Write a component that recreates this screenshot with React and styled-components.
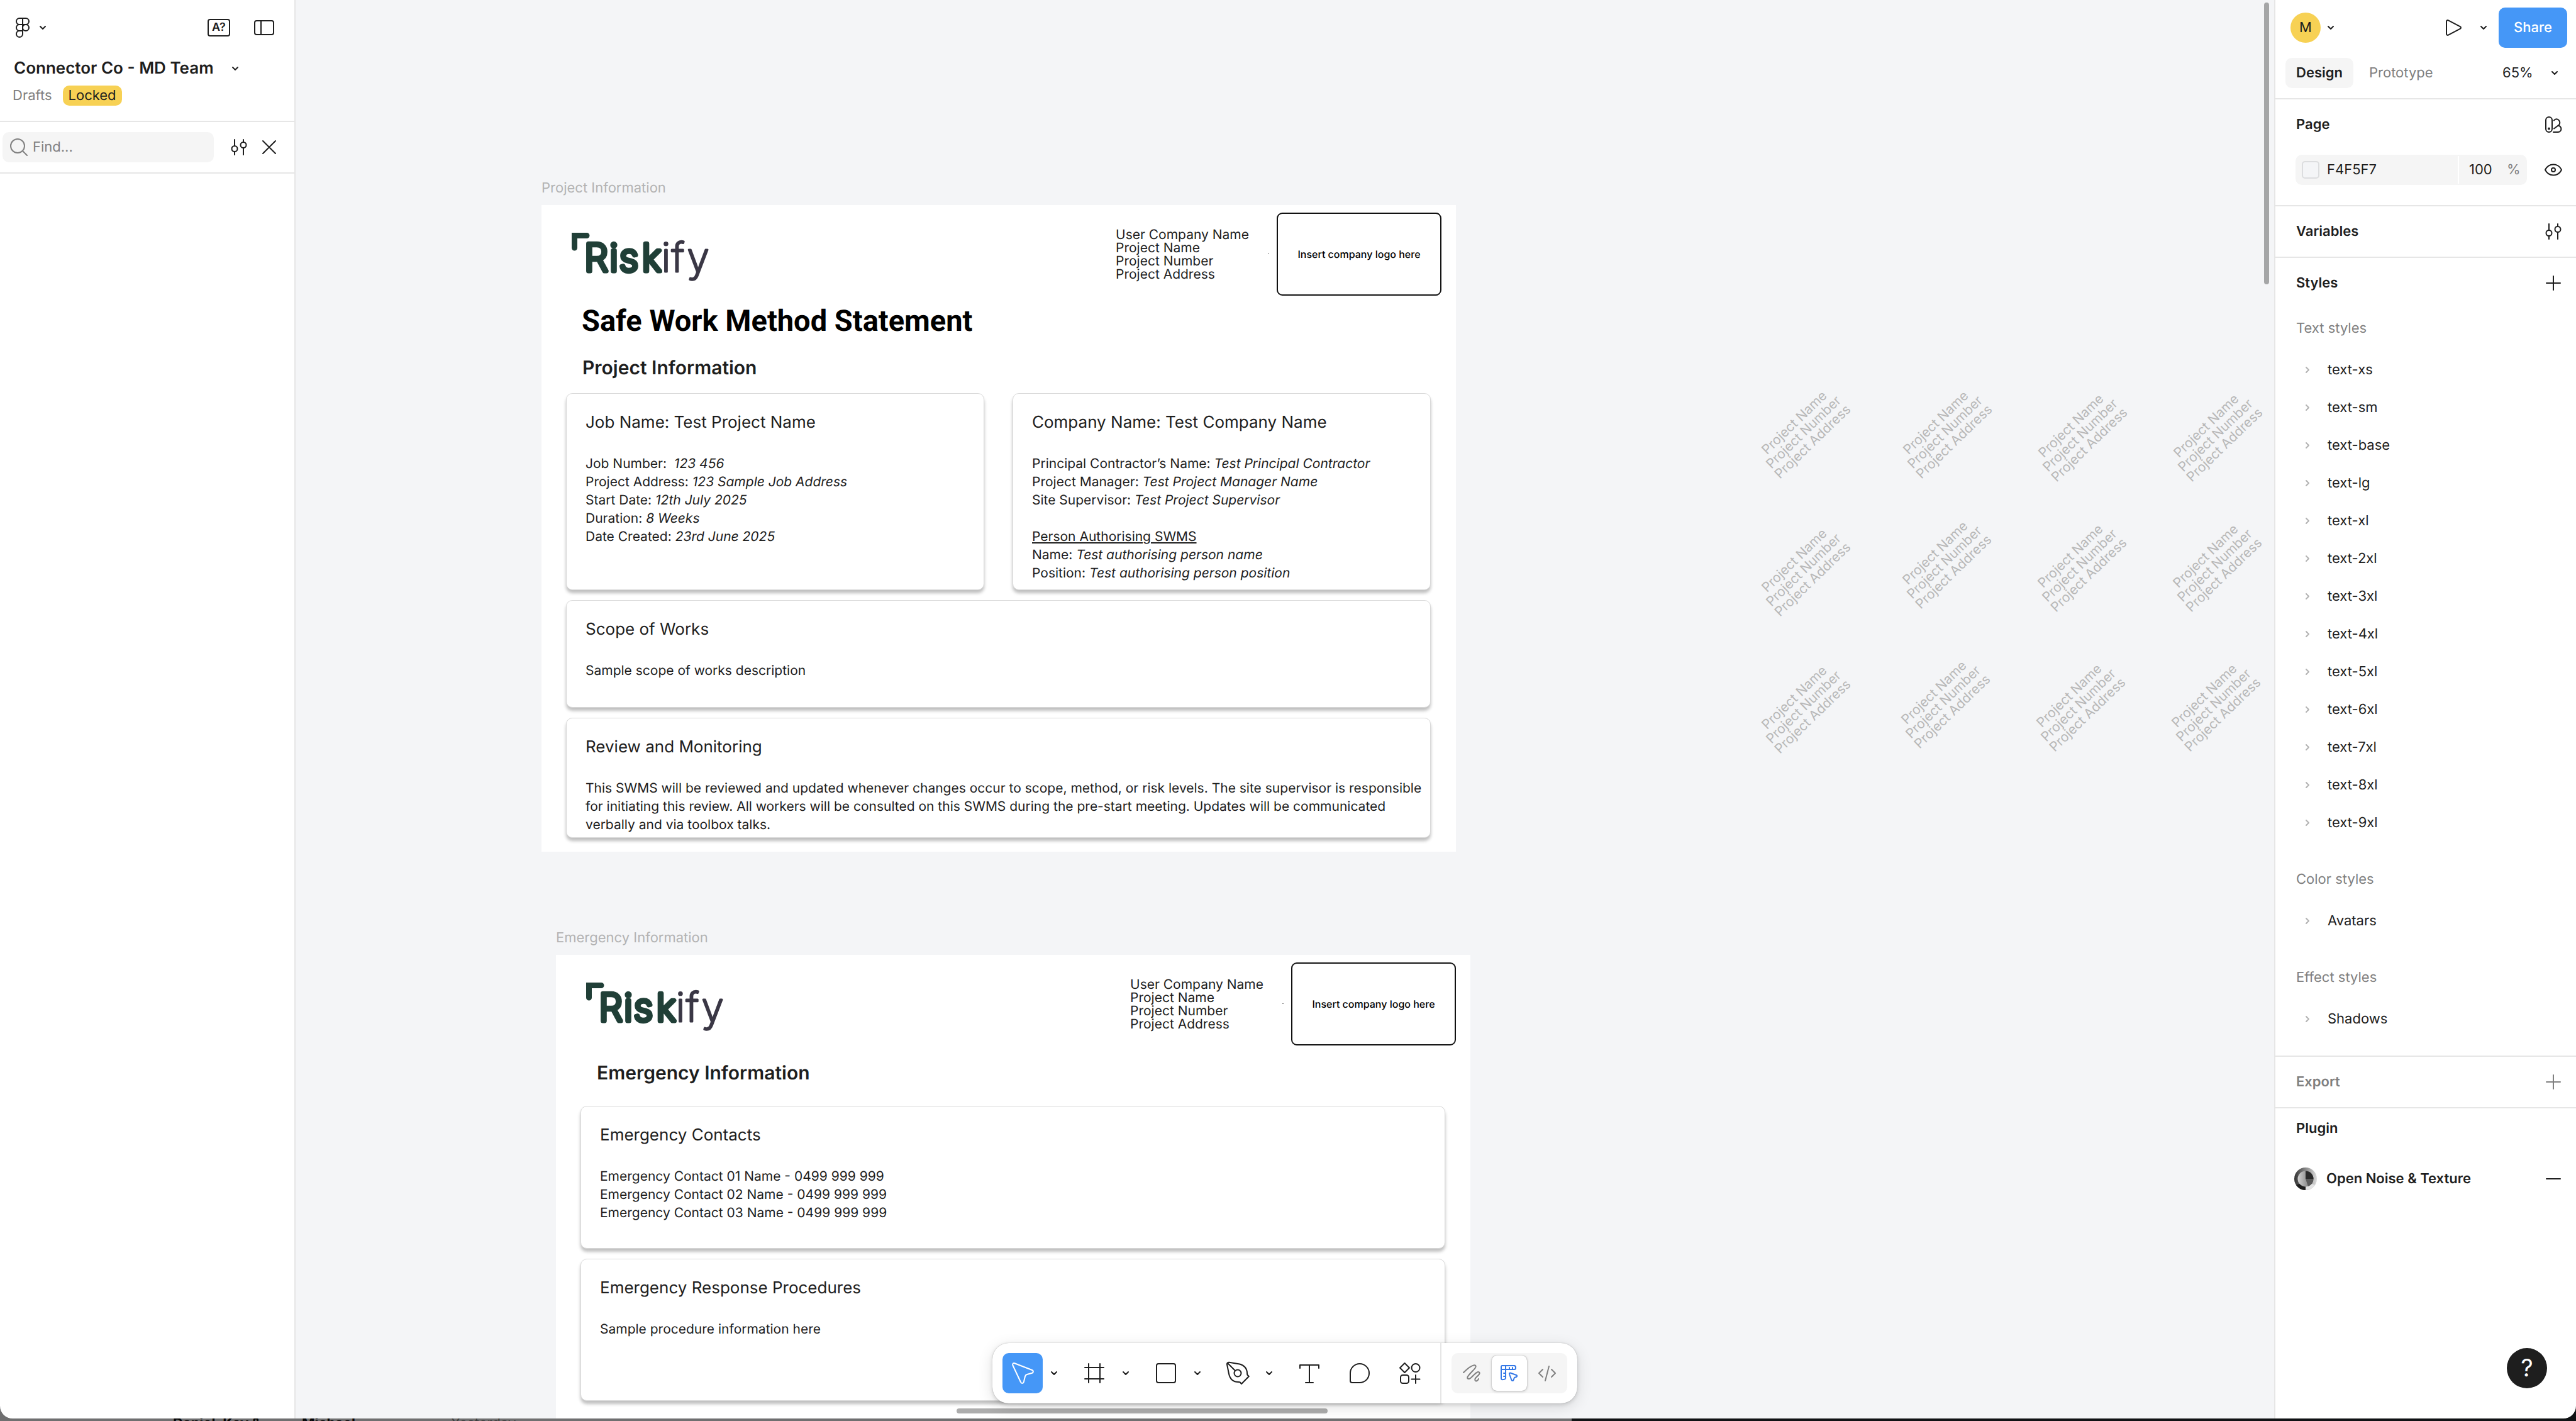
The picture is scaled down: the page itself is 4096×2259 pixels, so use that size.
import React from "react";
import styled, { createGlobalStyle, css } from "styled-components";

const ink = "#1e1e1e";
const muted = "#808080";
const line = "#e6e6e6";
const fill = "#f5f5f5";
const blue = "#4597f7";
const yellow = "#f7d154";

const GlobalStyle = createGlobalStyle`
  *, *::before, *::after { box-sizing: border-box; }
  body {
    margin: 0;
    background: #111;
    color: ${ink};
    font-family: Inter, "Liberation Sans", sans-serif;
    font-size: 22px;
    font-optical-sizing: none;
    text-rendering: geometricPrecision;
    overflow: hidden;
  }
  h1, h2, h3, p, ul { margin: 0; padding: 0; }
  ul { list-style: none; }
  button, input { font: inherit; color: inherit; border: 0; padding: 0; background: none; text-rendering: inherit; }
  svg { display: block; flex: none; }
`;

/* ---------- shell ---------- */

const Shell = styled.div`
  display: flex;
  flex-direction: column;
  height: 100vh;
  background: linear-gradient(90deg, #6f6f70 0 61%, #101214 61%);
`;

const Workspace = styled.div`
  flex: 1;
  min-height: 0;
  display: grid;
  grid-template-columns: 470px minmax(0, 1fr) 480px;
  overflow: hidden;
  border-radius: 0 0 20px 20px;
`;

const Behind = styled.div`
  height: 4px;
  flex: none;
  display: flex;
  overflow: hidden;
  padding-left: 275px;
  line-height: 22px;
`;

const BehindText = styled.span`
  flex: none;
  width: ${(p) => p.$w}px;
  margin-top: -3px;
  font-weight: ${(p) => (p.$bold ? 700 : 400)};
  color: ${(p) => (p.$bold ? "#050505" : "#3c3c3c")};
  white-space: nowrap;
`;

/* ---------- icons ---------- */

const Stroke = ({ size = 32, h, width = 2, color = "currentColor", children }) => (
  <svg
    width={size}
    height={h || size}
    viewBox={`0 0 ${size} ${h || size}`}
    fill="none"
    stroke={color}
    strokeWidth={width}
    strokeLinecap="round"
    strokeLinejoin="round"
    aria-hidden="true"
  >
    {children}
  </svg>
);

const Chevron = () => (
  <Stroke size={16}><path d="M4 6l4 4 4-4" /></Stroke>
);
const ChevronRight = () => (
  <Stroke size={16} color="#b3b3b3"><path d="M6 4l4 4-4 4" /></Stroke>
);
const FigmaMark = () => (
  <Stroke size={24} h={34}>
    <path d="M12 2H7a5 5 0 0 0 0 10h5zM12 2h5a5 5 0 0 1 0 10h-5zM12 12H7a5 5 0 0 0 0 10h5z" />
    <circle cx="17" cy="17" r="5" />
    <path d="M12 22v5a5 5 0 1 1-5-5" />
  </Stroke>
);
const PanelIcon = () => (
  <Stroke size={32} h={24}>
    <rect x="1" y="1" width="30" height="22" rx="3" />
    <path d="M11 1v22" />
  </Stroke>
);
const SearchIcon = () => (
  <Stroke size={28} color={muted}><circle cx="12" cy="12" r="11" /><path d="M20 20l7 7" /></Stroke>
);
const Sliders = () => (
  <Stroke size={26}>
    <path d="M6 1v10M6 20v5M20 1v4M20 14v11" />
    <circle cx="6" cy="15.500" r="4.500" />
    <circle cx="20" cy="9.500" r="4.500" />
  </Stroke>
);
const Cross = () => (
  <Stroke size={24}><path d="M2 2l20 20M22 2L2 22" /></Stroke>
);
const Play = () => (
  <Stroke size={28}><path d="M3 4v20a2 2 0 0 0 3 1.700l19-10a2 2 0 0 0 0-3.400L6 2.300A2 2 0 0 0 3 4z" /></Stroke>
);
const Plus = () => (
  <Stroke size={26}><path d="M13 2v22M2 13h22" /></Stroke>
);
const Minus = () => (
  <Stroke size={26}><path d="M2 13h22" /></Stroke>
);
const Swatches = () => (
  <Stroke size={28}>
    <rect x="2" y="2" width="10" height="24" rx="5" />
    <circle cx="7" cy="20.500" r="1" />
    <path d="M15 7.500c2-3 6-2.800 8 0s1.500 5 0 7L15 20.500M22 15.500c4 1 5 5 4 7.500s-3 3-5 3h-7" />
  </Stroke>
);
const Eye = () => (
  <Stroke size={30} h={22}>
    <path d="M2 11c3-6 8-8.500 13-8.500S25 5 28 11c-3 6-8 8.500-13 8.500S5 17 2 11z" />
    <circle cx="15" cy="11" r="3" />
  </Stroke>
);
const Cursor = () => (
  <Stroke size={40} color="#fff">
    <path d="M4.300 7.200C3.500 5 5.300 3.500 7.300 4.300L35 15c2.500 1 2.500 4 0 4.800l-8 2.200c-2 .6-2.400 1-3 3l-2.200 9c-.8 2.500-4 2.500-4.900 0z" />
  </Stroke>
);
const FrameIcon = () => (
  <Stroke size={32}><path d="M7 1v30M25 1v30M1 7h30M1 25h30" /></Stroke>
);
const RectIcon = () => (
  <Stroke size={34}><rect x="2" y="2" width="30" height="30" rx="3" /></Stroke>
);
const Pen = () => (
  <Stroke size={38}>
    <path d="M2 5c-.3-2 1.500-3.500 3.500-3.200L22 4.500c7 1.500 12 7 12 14.500l.3 2.500 2.500 2.500L25 36l-2.500-2.800L20 33C11 33 6.500 27 5 20z" />
    <path d="M3 3l12 12" />
    <circle cx="19" cy="19" r="5.500" />
  </Stroke>
);
const TypeIcon = () => (
  <Stroke size={34}><path d="M2 9V4h30v5M17 4v28M11 32h12" /></Stroke>
);
const Bubble = () => (
  <Stroke size={34}><path d="M2 17a15 15 0 1 1 15 15H5a3 3 0 0 1-3-3z" /></Stroke>
);
const Actions = () => (
  <Stroke size={36}>
    <path d="M9.500 2L17 9.500 9.500 17 2 9.500z" />
    <circle cx="27" cy="9.500" r="6.500" />
    <rect x="3" y="21" width="13" height="13" rx="3.500" />
    <path d="M27 21v13M20.500 27.500h13" />
  </Stroke>
);
const Squiggle = () => (
  <Stroke size={30}>
    <path d="M2 14C7 9 14 3 19 2.200c3-.3 3.500 2.500 1.500 4.800-3 4-10 10-12 14-1 2.800 2 4 4.500 2 4-3 8-9 12-10 2.500-.4 3.400 1.600 2 3.600-2 3-5 4.400-6.500 7.400-1 3 1 4 3 3 1.500-.7 2-2 2.500-3" />
  </Stroke>
);
const DevDesign = () => (
  <Stroke size={30} color="#3478e6">
    <path d="M3 3h20a3 3 0 0 1 2 3v1a2 2 0 0 1-2 2H9v14a3 3 0 0 1-3 2H5a2 2 0 0 1-3-2V5a2 2 0 0 1 1-2zM9 9V3M2 9h7M15 8V6M20 8V6M8 15H6M8 20H6" />
    <path d="M15 16.500c-.5-1.500.7-2.200 2-1.800l9 3.300c1.700.7 1.500 2.500 0 3l-3 1-1.500 3.800c-.7 1.700-2.500 1.600-3 .2z" />
  </Stroke>
);
const Code = () => (
  <Stroke size={30}><path d="M8 9l-6 6 6 6M22 9l6 6-6 6M18 4l-6 23" /></Stroke>
);
const NoiseIcon = () => (
  <svg width="36" height="36" viewBox="0 0 36 36" aria-hidden="true">
    <defs>
      <linearGradient id="ring" x1="0" x2="1">
        <stop offset="0" stopColor="#333" />
        <stop offset="1" stopColor="#ddd" />
      </linearGradient>
      <linearGradient id="core" x1="0" x2="1">
        <stop offset="0" stopColor="#d0d0d0" />
        <stop offset="1" stopColor="#666" />
      </linearGradient>
    </defs>
    <circle cx="18" cy="18" r="18" fill="url(#ring)" />
    <path d="M18 36A18 18 0 0 1 3 28l15-6z" fill="#1c1c1c" />
    <path d="M18 36a18 18 0 0 0 15-8l-15-6z" fill="#e4e4e4" />
    <circle cx="18" cy="18" r="12.500" fill="url(#core)" />
    <path d="M18 5.500A12.500 12.500 0 0 1 30.500 18H18z" fill="#2a2a2a" />
    <path d="M18 18h12.500A12.500 12.500 0 0 1 22 30z" fill="#5a5a5a" />
  </svg>
);

/* ---------- shared controls ---------- */

const IconButton = styled.button`
  display: grid;
  place-items: center;
  flex: none;
  width: ${(p) => p.$w || 48}px;
  height: 48px;
  margin-left: ${(p) => (p.$push ? "auto" : 0)};
  color: ${(p) => (p.$dim ? muted : ink)};
`;

const Row = styled.div`
  display: flex;
  align-items: center;
`;

/* ---------- left panel ---------- */

const LeftPanel = styled.aside`
  background: #fff;
  border-right: 2px solid ${line};
`;

const FileHeader = styled.header`
  height: 194px;
  border-bottom: 2px solid ${line};
  padding: 20px 24px 0 12px;
`;

const LanguageKey = styled.button`
  width: 36px;
  height: 28px;
  margin: 0 30px 0 auto;
  border: 2px solid ${ink};
  border-radius: 4px;
  font-size: 18px;
  font-weight: 600;
  line-height: 22px;
`;

const FileName = styled.button`
  display: flex;
  align-items: center;
  justify-content: space-between;
  width: 370px;
  height: 40px;
  margin-top: 21px;
  padding-left: 10px;
  font-size: 26px;
  font-weight: 600;
  line-height: 32px;
  white-space: nowrap;
`;

const Location = styled(Row)`
  height: 32px;
  margin-top: 7px;
  padding-left: 8px;
  gap: 17px;
  line-height: 32px;
  a { color: ${muted}; text-decoration: none; }
`;

const LockedTag = styled.span`
  padding: 0 9px;
  border-radius: 10px;
  background: ${yellow};
`;

const FindRow = styled(Row)`
  height: 82px;
  padding: 0 16px 0 4px;
  border-bottom: 2px solid ${line};
`;

const FindBox = styled.label`
  flex: 1;
  min-width: 0;
  display: flex;
  align-items: center;
  gap: 8px;
  height: 48px;
  margin-right: 16px;
  padding-left: 12px;
  border-radius: 10px;
  background: ${fill};
  input { flex: 1; min-width: 0; outline: 0; }
  input::placeholder { color: ${muted}; opacity: 1; }
`;

/* ---------- canvas ---------- */

const Canvas = styled.main`
  position: relative;
  overflow: hidden;
  background: #f4f5f7;
`;

const Artboard = styled.section`
  position: absolute;
  left: ${(p) => p.$x}px;
  top: ${(p) => p.$y}px;
  width: 1454px;
`;

const ArtboardName = styled.p`
  height: 40px;
  line-height: 26px;
  color: #b3b3b3;
`;

const Sheet = styled.div`
  min-height: 1028px;
  background: #fff;
`;

const SheetHeader = styled.header`
  display: flex;
  align-items: center;
  height: 144px;
  padding: 12px 23px 0 44px;
`;

const Meta = styled.p`
  position: relative;
  width: 256px;
  margin-left: auto;
  padding-top: 2px;
  font-size: 21px;
  line-height: 21px;
  white-space: pre-line;
  &::after {
    content: "";
    position: absolute;
    right: 12px;
    top: 42px;
    width: 2px;
    height: 1px;
    background: #777;
  }
`;

const LogoSlot = styled.div`
  display: grid;
  place-items: center;
  width: 262px;
  height: 132px;
  border: 2px solid #111;
  border-radius: 9px;
  color: #000;
  font-size: 16px;
  font-weight: 500;
`;

const DocTitle = styled.h1`
  padding: 13px 64px 0;
  color: #000;
  font-family: Roboto, "Liberation Sans", sans-serif;
  font-size: 47px;
  font-weight: 700;
  line-height: 56px;
`;

const SectionTitle = styled.h2`
  padding: ${(p) => (p.$first ? "24px 65px 32px" : "26px 65px 20px")};
  font-size: 30px;
  font-weight: 600;
  line-height: 40px;
  font-optical-sizing: auto;
`;

const Cards = styled.div`
  display: flex;
  flex-direction: column;
  gap: 16px;
  padding: 0 40px 0 39px;
`;

const Pair = styled.div`
  display: grid;
  grid-template-columns: 1fr 1fr;
  gap: 45px;
`;

const CardBox = styled.article`
  min-height: ${(p) => p.$h}px;
  padding: 30px 4px 0 30px;
  border: 1px solid #d9d9d9;
  border-radius: 10px;
  background: #fff;
  box-shadow: 0 5px 5px rgba(0, 0, 0, 0.25);
  h3 { margin-bottom: 36px; font-size: 26px; font-weight: 400; line-height: 31px; }
  p { min-height: 29px; font-size: 21px; line-height: 29px; }
`;

const Watermark = styled.p`
  position: absolute;
  left: ${(p) => p.$x - 80}px;
  top: ${(p) => p.$y - 31}px;
  width: 160px;
  color: #b8b8b8;
  font-size: 21px;
  line-height: 21px;
  text-align: center;
  white-space: pre-line;
  transform: rotate(-44deg);
`;

const Scrollbar = styled.div`
  position: absolute;
  border-radius: 4px;
  background: rgba(0, 0, 0, 0.32);
  ${(p) =>
    p.$vertical
      ? css`top: 4px; right: 8px; width: 8px; height: 448px;`
      : css`left: 1051px; bottom: 8px; width: 590px; height: 8px;`}
`;

/* ---------- toolbar ---------- */

const Toolbar = styled.div`
  position: absolute;
  left: 50%;
  bottom: 24px;
  transform: translateX(-50%);
  display: flex;
  height: 96px;
  border-radius: 26px;
  background: #fff;
  box-shadow: 0 0 1px rgba(0, 0, 0, 0.4), 0 2px 6px rgba(0, 0, 0, 0.14), 0 6px 24px rgba(0, 0, 0, 0.12);
`;

const Tools = styled.div`
  display: flex;
  align-items: center;
  gap: 14px;
  padding: 0 16px;
  border-right: 2px solid ${line};
`;

const ToolButton = styled.button`
  display: grid;
  place-items: center;
  width: 64px;
  height: 64px;
  border-radius: 10px;
  background: ${(p) => (p.$active ? blue : "transparent")};
`;

const Caret = styled.button`
  display: grid;
  place-items: center;
  width: 36px;
  height: 64px;
`;

const PlainTools = styled.div`
  display: flex;
  gap: 16px;
`;

const Modes = styled.div`
  display: flex;
  align-items: center;
  margin: 16px;
  padding: 0 4px;
  gap: 4px;
  width: 184px;
  border-radius: 10px;
  background: ${fill};
`;

const Mode = styled.button`
  display: grid;
  place-items: center;
  flex: 1;
  height: 56px;
  border-radius: 8px;
  color: ${muted};
  ${(p) => p.$active && css`background: #fff; box-shadow: 0 0 1px rgba(0,0,0,.5), 0 1px 4px rgba(0,0,0,.2);`}
`;

/* ---------- right panel ---------- */

const RightPanel = styled.aside`
  position: relative;
  background: #fff;
  border-left: 2px solid ${line};
`;

const TopBar = styled(Row)`
  height: 88px;
  padding: 0 14px 0 24px;
`;

const Avatar = styled.button`
  width: 48px;
  height: 48px;
  border-radius: 50%;
  background: ${yellow};
`;

const Share = styled.button`
  width: 109px;
  height: 64px;
  border-radius: 10px;
  background: ${blue};
  color: #fff;
  font-weight: 500;
`;

const TabBar = styled(Row)`
  height: 70px;
  padding: 4px 14px 16px 16px;
  border-bottom: 2px solid ${line};
`;

const Tab = styled.button`
  height: 48px;
  padding: 0 17px;
  margin-right: 8px;
  border-radius: 10px;
  font-weight: ${(p) => (p.$active ? 600 : 400)};
  color: ${(p) => (p.$active ? ink : muted)};
  background: ${(p) => (p.$active ? fill : "transparent")};
`;

const Zoom = styled.button`
  display: flex;
  align-items: center;
  justify-content: space-between;
  width: 103px;
  margin-left: auto;
  padding-right: 12px;
`;

const Section = styled.section`
  border-bottom: ${(p) => (p.$last ? 0 : 2)}px solid ${line};
`;

const SectionHead = styled(Row)`
  justify-content: space-between;
  height: ${(p) => p.$h || 80}px;
  padding: 0 14px 0 33px;
  color: ${(p) => (p.$dim ? muted : ink)};
  h2 { font-size: 22px; font-weight: 600; line-height: 32px; }
`;

const FillRow = styled(Row)`
  justify-content: space-between;
  padding: 8px 14px 32px 32px;
`;

const FillField = styled(Row)`
  width: 368px;
  height: 48px;
  border-radius: 10px;
  background: ${fill};
  padding-left: 10px;
`;

const Swatch = styled.button`
  width: 28px;
  height: 28px;
  margin-right: 12px;
  border: 2px solid #dcdddf;
  border-radius: 5px;
  background: #f4f5f7;
`;

const HexInput = styled.input`
  flex: 1;
  min-width: 0;
  height: 44px;
  outline: 0;
`;

const OpacityField = styled.label`
  display: flex;
  align-items: center;
  width: 110px;
  height: 44px;
  padding-left: 16px;
  border-left: 2px solid #fff;
  color: ${muted};
  input { width: 60px; color: ${ink}; outline: 0; }
`;

const Group = styled.div`
  padding-bottom: 28px;
  h3 {
    height: 68px;
    padding-left: 33px;
    color: ${muted};
    font-size: 22px;
    font-weight: 400;
    line-height: 64px;
  }
`;

const StyleRow = styled.button`
  display: flex;
  align-items: center;
  gap: 24px;
  width: 100%;
  height: 60px;
  padding-left: 43px;
  text-align: left;
`;

const PluginRow = styled(Row)`
  height: 60px;
  margin-top: 18px;
  padding: 0 14px 0 30px;
  gap: 15px;
  font-weight: 600;
`;

const Help = styled.button`
  position: absolute;
  right: 46px;
  bottom: 48px;
  width: 64px;
  height: 64px;
  border-radius: 50%;
  background: ${ink};
  color: #fff;
  font-size: 38px;
  line-height: 64px;
`;

/* ---------- document parts ---------- */

const RiskifyLogo = () => (
  <svg width="230" height="132" viewBox="0 0 230 132" role="img" aria-label="Riskify" strokeLinejoin="round" textAnchor="middle">
    <path d="M4 32h24a4.500 4.500 0 0 1 0 9H13v15a4.500 4.500 0 0 1-9 0z" fill="#203f37" />
    <text x="43 71 95 131" y="93" fontSize="60" fontWeight="200" fill="#203f37" stroke="#203f37" strokeWidth="7">Risk</text>
    <text x="154 173 205" y="94" fontSize="64" fontWeight="200" fill="#3a3745" stroke="#3a3745" strokeWidth="3">ify</text>
  </svg>
);

const DocHeader = () => (
  <SheetHeader>
    <RiskifyLogo />
    <Meta>{"User Company Name\nProject Name\nProject Number\nProject Address"}</Meta>
    <LogoSlot>Insert company logo here</LogoSlot>
  </SheetHeader>
);

const Card = ({ title, height, children }) => (
  <CardBox $h={height}>
    <h3>{title}</h3>
    {children}
  </CardBox>
);

const Tool = ({ label, icon, active }) => (
  <Row>
    <ToolButton aria-label={label} $active={active}>{icon}</ToolButton>
    <Caret aria-label={`${label} options`}><Chevron /></Caret>
  </Row>
);

const watermarks = [
  [2869, 687], [3094, 687], [3309, 692], [3524, 692],
  [2869, 906], [3093, 894], [3308, 899], [3523, 899],
  [2869, 1124], [3091, 1116], [3306, 1121], [3521, 1121],
];

const textStyles = ["xs", "sm", "base", "lg", "xl", "2xl", "3xl", "4xl", "5xl", "6xl", "7xl", "8xl", "9xl"];

const StyleGroup = ({ title, items }) => (
  <Group>
    <h3>{title}</h3>
    <ul>
      {items.map((name) => (
        <li key={name}>
          <StyleRow><ChevronRight />{name}</StyleRow>
        </li>
      ))}
    </ul>
  </Group>
);

export default function App() {
  return (
    <Shell>
      <GlobalStyle />
      <Workspace>
        <LeftPanel>
          <FileHeader>
            <Row>
              <IconButton aria-label="Main menu"><FigmaMark /></IconButton>
              <Chevron />
              <LanguageKey aria-label="Missing fonts">A?</LanguageKey>
              <IconButton aria-label="Toggle panels"><PanelIcon /></IconButton>
            </Row>
            <FileName>Connector Co - MD Team<Chevron /></FileName>
            <Location>
              <a href="#drafts">Drafts</a>
              <LockedTag>Locked</LockedTag>
            </Location>
          </FileHeader>
          <FindRow>
            <FindBox>
              <SearchIcon />
              <input type="text" placeholder="Find..." aria-label="Find" />
            </FindBox>
            <IconButton aria-label="Filter"><Sliders /></IconButton>
            <IconButton aria-label="Close"><Cross /></IconButton>
          </FindRow>
        </LeftPanel>

        <Canvas>
          <Artboard $x={391} $y={286}>
            <ArtboardName>Project Information</ArtboardName>
            <Sheet>
              <DocHeader />
              <DocTitle>Safe Work Method Statement</DocTitle>
              <SectionTitle>Project Information</SectionTitle>
              <Cards>
                <Pair>
                  <Card title="Job Name: Test Project Name" height={313}>
                    <p>Job Number: &nbsp;<em>123 456</em></p>
                    <p>Project Address: <em>123 Sample Job Address</em></p>
                    <p>Start Date: <em>12th July 2025</em></p>
                    <p>Duration: <em>8 Weeks</em></p>
                    <p>Date Created: <em>23rd June 2025</em></p>
                  </Card>
                  <Card title="Company Name: Test Company Name" height={313}>
                    <p>Principal Contractor’s Name: <em>Test Principal Contractor</em></p>
                    <p>Project Manager: <em>Test Project Manager Name</em></p>
                    <p>Site Supervisor: <em>Test Project Supervisor</em></p>
                    <p />
                    <p><u>Person Authorising SWMS</u></p>
                    <p>Name: <em>Test authorising person name</em></p>
                    <p>Position: <em>Test authorising person position</em></p>
                  </Card>
                </Pair>
                <Card title="Scope of Works" height={171}>
                  <p>Sample scope of works description</p>
                </Card>
                <Card title="Review and Monitoring" height={191}>
                  <p>
                    This SWMS will be reviewed and updated whenever changes occur to scope, method, or risk levels. The site supervisor is responsible
                    for initiating this review. All workers will be consulted on this SWMS during the pre-start meeting. Updates will be communicated
                    verbally and via toolbox talks.
                  </p>
                </Card>
              </Cards>
            </Sheet>
          </Artboard>

          <Artboard $x={414} $y={1478}>
            <ArtboardName>Emergency Information</ArtboardName>
            <Sheet>
              <DocHeader />
              <SectionTitle $first>Emergency Information</SectionTitle>
              <Cards>
                <Card title="Emergency Contacts" height={227}>
                  <p>Emergency Contact 01 Name - 0499 999 999</p>
                  <p>Emergency Contact 02 Name - 0499 999 999</p>
                  <p>Emergency Contact 03 Name - 0499 999 999</p>
                </Card>
                <Card title="Emergency Response Procedures" height={226}>
                  <p>Sample procedure information here</p>
                </Card>
              </Cards>
            </Sheet>
          </Artboard>

          {watermarks.map(([x, y]) => (
            <Watermark key={`${x}-${y}`} $x={x - 471} $y={y}>{"Project Name\nProject Number\nProject Address"}</Watermark>
          ))}

          <Scrollbar $vertical />
          <Scrollbar />

          <Toolbar role="toolbar" aria-label="Tools">
            <Tools>
              <Tool label="Move" icon={<Cursor />} active />
              <Tool label="Frame" icon={<FrameIcon />} />
              <Tool label="Rectangle" icon={<RectIcon />} />
              <Tool label="Pen" icon={<Pen />} />
              <PlainTools>
                <ToolButton aria-label="Text"><TypeIcon /></ToolButton>
                <ToolButton aria-label="Comment"><Bubble /></ToolButton>
                <ToolButton aria-label="Actions"><Actions /></ToolButton>
              </PlainTools>
            </Tools>
            <Modes>
              <Mode aria-label="Draw"><Squiggle /></Mode>
              <Mode aria-label="Design" $active><DevDesign /></Mode>
              <Mode aria-label="Dev Mode"><Code /></Mode>
            </Modes>
          </Toolbar>
        </Canvas>

        <RightPanel>
          <TopBar>
            <Avatar aria-label="Account">M</Avatar>
            <IconButton $w={32} aria-label="Account menu"><Chevron /></IconButton>
            <IconButton $push aria-label="Present"><Play /></IconButton>
            <IconButton $w={48} aria-label="Present options"><Chevron /></IconButton>
            <Share>Share</Share>
          </TopBar>
          <TabBar>
            <Tab $active>Design</Tab>
            <Tab>Prototype</Tab>
            <Zoom>65%<Chevron /></Zoom>
          </TabBar>
          <Section>
            <SectionHead>
              <h2>Page</h2>
              <IconButton $w={44} aria-label="Styles and variables"><Swatches /></IconButton>
            </SectionHead>
            <FillRow>
              <FillField>
                <Swatch aria-label="Page colour" />
                <HexInput aria-label="Hex colour" defaultValue="F4F5F7" />
                <OpacityField><input aria-label="Opacity" defaultValue="100" />%</OpacityField>
              </FillField>
              <IconButton $w={44} aria-label="Toggle visibility"><Eye /></IconButton>
            </FillRow>
          </Section>
          <Section>
            <SectionHead>
              <h2>Variables</h2>
              <IconButton $w={44} aria-label="Open variables"><Sliders /></IconButton>
            </SectionHead>
          </Section>
          <Section>
            <SectionHead>
              <h2>Styles</h2>
              <IconButton $w={44} aria-label="Add style"><Plus /></IconButton>
            </SectionHead>
            <StyleGroup title="Text styles" items={textStyles.map((s) => `text-${s}`)} />
            <StyleGroup title="Color styles" items={["Avatars"]} />
            <StyleGroup title="Effect styles" items={["Shadows"]} />
          </Section>
          <Section>
            <SectionHead $dim>
              <h2>Export</h2>
              <IconButton $w={44} $dim aria-label="Add export"><Plus /></IconButton>
            </SectionHead>
          </Section>
          <Section $last>
            <SectionHead $h={64}><h2>Plugin</h2></SectionHead>
            <PluginRow>
              <NoiseIcon />
              Open Noise &amp; Texture
              <IconButton $w={44} $push aria-label="Remove plugin"><Minus /></IconButton>
            </PluginRow>
          </Section>
          <Help aria-label="Help">?</Help>
        </RightPanel>
      </Workspace>
      <Behind aria-hidden="true">
        <BehindText $w={205} $bold>Daniel, Kev &amp;</BehindText>
        <BehindText $w={237} $bold>Michael</BehindText>
        <BehindText $w={200}>Yesterday</BehindText>
      </Behind>
    </Shell>
  );
}
